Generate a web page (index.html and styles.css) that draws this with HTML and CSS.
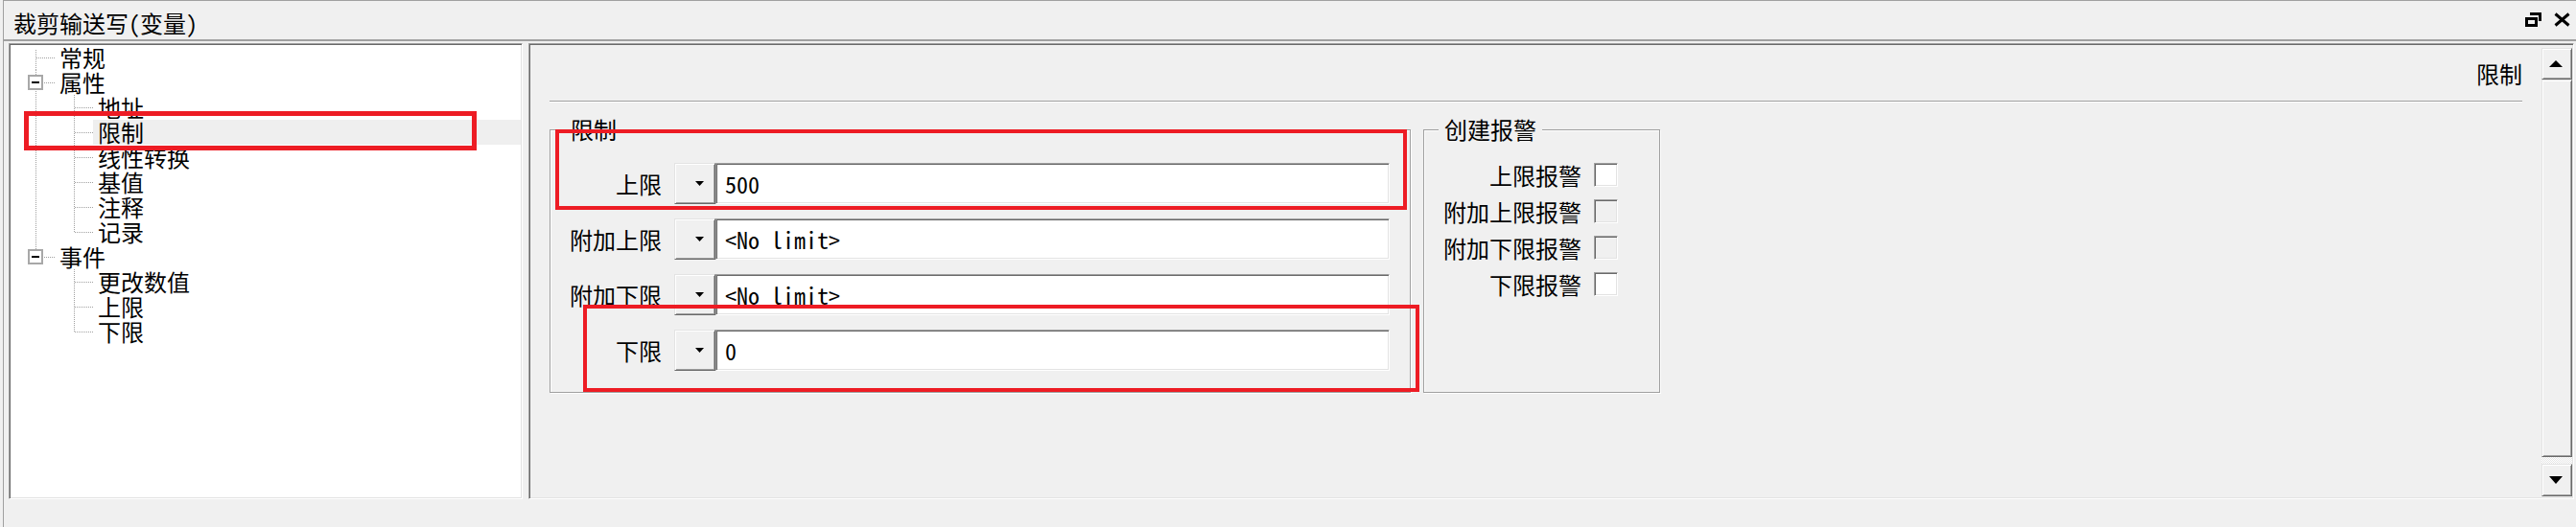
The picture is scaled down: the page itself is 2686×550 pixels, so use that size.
FILE: index.html
```html
<!DOCTYPE html>
<html lang="zh-CN">
<head>
<meta charset="utf-8">
<title>裁剪输送写(变量)</title>
<link rel="stylesheet" href="styles.css">
</head>
<body>
<div class="window">
  <div class="titlebar">
    <span class="title">裁剪输送写(变量)</span>
    <span class="winbtns">
      <svg class="ico" width="17" height="15" viewBox="0 0 17 15"><path d="M5 0H17V9H14V3H5Z M0 5H13V15H0Z M3 8V12H10V8Z" fill="#000" fill-rule="evenodd"/></svg>
      <svg class="ico" width="17" height="15" viewBox="0 0 17 15"><path d="M1.5 1.5L15.5 13.5M15.5 1.5L1.5 13.5" stroke="#000" stroke-width="3"/></svg>
    </span>
  </div>
  <div class="main">
    <div class="tree sunken">
      <div class="row"><span class="br tee first"></span><span class="lbl">常规</span></div>
      <div class="row"><span class="br tee"><span class="exp"><i></i></span></span><span class="lbl">属性</span></div>
      <div class="row"><span class="pipe"></span><span class="br tee"></span><span class="lbl">地址</span></div>
      <div class="row"><span class="pipe"></span><span class="br tee"></span><span class="lbl sel">限制</span></div>
      <div class="row"><span class="pipe"></span><span class="br tee"></span><span class="lbl">线性转换</span></div>
      <div class="row"><span class="pipe"></span><span class="br tee"></span><span class="lbl">基值</span></div>
      <div class="row"><span class="pipe"></span><span class="br tee"></span><span class="lbl">注释</span></div>
      <div class="row"><span class="pipe"></span><span class="br ell"></span><span class="lbl">记录</span></div>
      <div class="row"><span class="br ell"><span class="exp"><i></i></span></span><span class="lbl">事件</span></div>
      <div class="row"><span class="blank"></span><span class="br tee"></span><span class="lbl">更改数值</span></div>
      <div class="row"><span class="blank"></span><span class="br tee"></span><span class="lbl">上限</span></div>
      <div class="row"><span class="blank"></span><span class="br ell"></span><span class="lbl">下限</span></div>
    </div>
    <div class="pane sunken">
      <div class="content">
        <div class="pane-head">限制</div>
        <div class="sep"></div>
        <div class="groups">
          <div class="group g-limit">
            <div class="legend">限制</div>
            <div class="grows">
              <div class="frow"><span class="flabel">上限</span><span class="ddbtn raised"><svg width="9" height="5" viewBox="0 0 9 5"><polygon points="0,0 9,0 4.5,5" fill="#000"/></svg></span><span class="field sunken">500</span></div>
              <div class="frow"><span class="flabel">附加上限</span><span class="ddbtn raised"><svg width="9" height="5" viewBox="0 0 9 5"><polygon points="0,0 9,0 4.5,5" fill="#000"/></svg></span><span class="field sunken">&lt;No limit&gt;</span></div>
              <div class="frow"><span class="flabel">附加下限</span><span class="ddbtn raised"><svg width="9" height="5" viewBox="0 0 9 5"><polygon points="0,0 9,0 4.5,5" fill="#000"/></svg></span><span class="field sunken">&lt;No limit&gt;</span></div>
              <div class="frow"><span class="flabel">下限</span><span class="ddbtn raised"><svg width="9" height="5" viewBox="0 0 9 5"><polygon points="0,0 9,0 4.5,5" fill="#000"/></svg></span><span class="field sunken">0</span></div>
            </div>
          </div>
          <div class="group g-alarm">
            <div class="legend">创建报警</div>
            <div class="crows">
              <div class="crow"><span class="clabel">上限报警</span><span class="cbox sunken"></span></div>
              <div class="crow"><span class="clabel">附加上限报警</span><span class="cbox sunken off"></span></div>
              <div class="crow"><span class="clabel">附加下限报警</span><span class="cbox sunken off"></span></div>
              <div class="crow"><span class="clabel">下限报警</span><span class="cbox sunken"></span></div>
            </div>
          </div>
        </div>
      </div>
      <div class="vscroll">
        <span class="sbtn raised"><svg width="14" height="7" viewBox="0 0 14 7"><polygon points="0,7 7,0 14,7" fill="#000"/></svg></span>
        <span class="thumb raised"></span>
        <span class="track"></span>
        <span class="sbtn down raised"><svg width="14" height="8" viewBox="0 0 14 8"><polygon points="0,0 14,0 7,8" fill="#000"/></svg></span>
      </div>
    </div>
  </div>
</div>
<div class="mark mark-tree"></div>
<div class="mark mark-upper"></div>
<div class="mark mark-lower"></div>
</body>
</html>
```
FILE: styles.css
```css
* { box-sizing: border-box; }
html, body { margin: 0; padding: 0; }
body {
  width: 2686px;
  height: 550px;
  overflow: hidden;
  background: #f0f0f0;
  color: #000;
  font-family: "Noto Sans CJK SC", "Noto Sans", sans-serif;
  font-size: 24px;
}
.window {
  margin-left: 3px;
  height: 550px;
  border-left: 1px solid #a0a0a0;
  border-top: 1px solid #a0a0a0;
}
.titlebar {
  height: 42px;
  display: flex;
  align-items: flex-start;
  border-bottom: 2px solid #a0a0a0;
  margin-bottom: 2px;
}
.title {
  padding: 11px 0 0 10px;
  line-height: 24px;
  white-space: nowrap;
  font-family: "Noto Sans Mono CJK SC", "Noto Sans CJK SC", monospace;
}
.winbtns {
  margin-left: auto;
  padding: 12px 6px 0 0;
  display: flex;
  gap: 13px;
}
.ico { display: block; }

.main {
  display: flex;
  gap: 6px;
  height: 476px;
  padding: 0 2px 0 5px;
}
.sunken {
  border: 1px solid;
  border-color: #a0a0a0 #fff #fff #a0a0a0;
  box-shadow: inset 1px 1px 0 #696969, inset -1px -1px 0 #e3e3e3;
}
.raised {
  border: 1px solid;
  border-color: #e3e3e3 #696969 #696969 #e3e3e3;
  box-shadow: inset 1px 1px 0 #fff, inset -1px -1px 0 #a0a0a0;
  background: #f0f0f0;
}

/* tree */
.tree {
  width: 536px;
  height: 476px;
  flex: none;
  background: #fff;
  padding: 1px;
}
.row {
  display: flex;
  height: 26px;
}
.pipe, .blank { width: 40px; flex: none; }
.br { width: 46px; flex: none; display: flex; align-items: center; padding-left: 18px; }
.pipe {
  background: repeating-linear-gradient(to bottom, #a0a0a0 0 1px, transparent 1px 2px) 26px 0 / 1px 26px no-repeat;
}
.tee {
  background:
    repeating-linear-gradient(to right, #a0a0a0 0 1px, transparent 1px 2px) 27px 13px / 19px 1px no-repeat,
    repeating-linear-gradient(to bottom, #a0a0a0 0 1px, transparent 1px 2px) 26px 0 / 1px 26px no-repeat;
}
.tee.first {
  background:
    repeating-linear-gradient(to right, #a0a0a0 0 1px, transparent 1px 2px) 27px 13px / 19px 1px no-repeat,
    repeating-linear-gradient(to bottom, #a0a0a0 0 1px, transparent 1px 2px) 26px 5px / 1px 21px no-repeat;
}
.ell {
  background:
    repeating-linear-gradient(to right, #a0a0a0 0 1px, transparent 1px 2px) 27px 13px / 19px 1px no-repeat,
    repeating-linear-gradient(to bottom, #a0a0a0 0 1px, transparent 1px 2px) 26px 0 / 1px 14px no-repeat;
}
.exp {
  width: 16px;
  height: 16px;
  border: 2px solid #a8a8a8;
  background: #fff;
  display: flex;
  align-items: center;
  justify-content: center;
}
.exp i { display: block; width: 8px; height: 2px; background: #000; }
.lbl {
  padding-left: 5px;
  line-height: 26px;
  white-space: nowrap;
}
.lbl.sel { flex: 1; background: #efefef; }

/* right pane */
.pane {
  flex: 1;
  display: flex;
  height: 476px;
  background: #f0f0f0;
  padding: 1px;
}
.content {
  flex: 1;
  padding: 18px 20px 0 20px;
  display: flex;
  flex-direction: column;
}
.pane-head {
  height: 24px;
  line-height: 24px;
  text-align: right;
}
.sep {
  margin-top: 16px;
  height: 2px;
  border-top: 1px solid #a0a0a0;
  border-bottom: 1px solid #fff;
}
.groups {
  margin-top: 28px;
  display: flex;
  gap: 13px;
}
.group {
  height: 275px;
  border: 1px solid #a0a0a0;
  box-shadow: inset 1px 1px 0 #fff, 1px 1px 0 #fff;
  display: flex;
  flex-direction: column;
}
.g-limit { width: 898px; }
.g-alarm { width: 247px; }
.legend {
  align-self: flex-start;
  height: 24px;
  line-height: 24px;
  margin: -13px 0 0 15px;
  padding: 0 6px;
  background: #f0f0f0;
  white-space: nowrap;
}
.grows {
  padding-top: 23px;
  display: flex;
  flex-direction: column;
  gap: 15px;
}
.frow { display: flex; height: 43px; }
.flabel {
  width: 116px;
  text-align: right;
  line-height: 43px;
  white-space: nowrap;
}
.ddbtn {
  margin-left: 13px;
  width: 43px;
  display: flex;
  align-items: center;
  padding-left: 21px;
}
.ddbtn svg { display: block; }
.field {
  width: 703px;
  background: #fff;
  padding-left: 9px;
  line-height: 41px;
  font-family: "Noto Sans Mono CJK SC", "Liberation Mono", monospace;
  font-size: 24px;
  white-space: pre;
}
.crows {
  padding-top: 23px;
  display: flex;
  flex-direction: column;
  gap: 13px;
}
.crow { display: flex; height: 25px; }
.clabel {
  width: 164px;
  text-align: right;
  line-height: 25px;
  white-space: nowrap;
}
.cbox {
  margin-left: 13px;
  width: 25px;
  height: 25px;
  background: #fff;
}
.cbox.off { background: #f0f0f0; }

/* scrollbar */
.vscroll {
  width: 32px;
  flex: none;
  margin: 3px 0 1px;
  display: flex;
  flex-direction: column;
}
.sbtn {
  height: 33px;
  display: flex;
  align-items: center;
  justify-content: center;
  padding-right: 2px;
}
.sbtn.down { height: 34px; }
.sbtn svg { display: block; }
.thumb { flex: 1; }
.track {
  height: 7px;
  background: repeating-conic-gradient(#fff 0 25%, #e6e6e6 0 50%) 0 0 / 2px 2px;
}

/* annotation marks */
.mark {
  position: absolute;
  border: 4px solid #ed1c24;
  pointer-events: none;
}
.mark-tree { left: 25px; top: 116px; width: 472px; height: 41px; border-width: 5px; }
.mark-upper { left: 579px; top: 135px; width: 888px; height: 84px; }
.mark-lower { left: 608px; top: 318px; width: 872px; height: 91px; }
```
